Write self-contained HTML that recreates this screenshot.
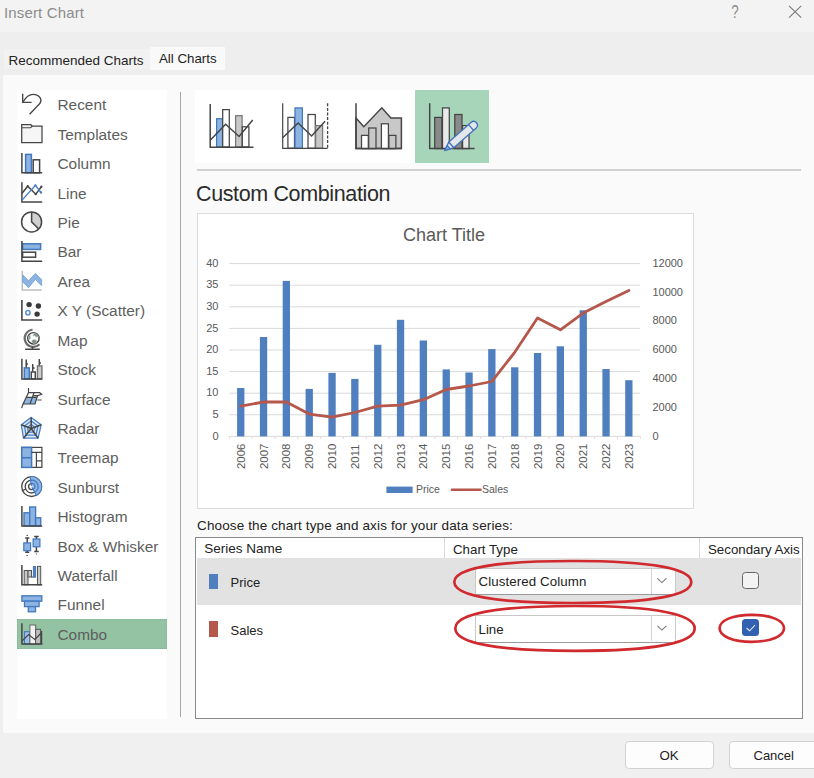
<!DOCTYPE html>
<html lang="en">
<head>
<meta charset="utf-8">
<title>Insert Chart</title>
<style>
html,body{margin:0;padding:0;}
body{width:814px;height:778px;overflow:hidden;background:#eeeeee;font-family:"Liberation Sans",sans-serif;position:relative;color:#222;}
.abs{position:absolute;}
.t{position:absolute;white-space:nowrap;line-height:1;}
#titlebar{left:0;top:0;width:814px;height:32px;background:#f3f3f3;}
#panel{left:2.5px;top:74.5px;width:812px;height:658.5px;background:#fafafa;}
#bottom{left:0;top:733px;width:814px;height:45px;background:#f0f0f0;}
#tab1{left:4px;top:49px;width:146px;height:19.5px;background:#f2f2f2;}
#tab2{left:150.3px;top:46.7px;width:75px;height:23.2px;background:#f9f9f9;}
#list{left:17px;top:89.5px;width:149.7px;height:629.3px;background:#fff;}
#sel{left:17px;top:619px;width:149.7px;height:29.5px;background:#93c3a3;box-sizing:border-box;border:1px dotted #86b697;}
#vdiv{left:180.2px;top:92px;width:1px;height:625px;background:#a6a6a6;}
#thumbs{left:195px;top:90px;width:221px;height:73px;background:#fff;}
#thsel{left:415px;top:90px;width:74px;height:73px;background:#a7d5ba;}
#hdiv{left:197px;top:169.4px;width:604px;height:1.2px;background:#d0d0d0;}
#chartbox{left:197px;top:213px;width:495px;height:294px;background:#fff;border:1px solid #dcdcdc;}
#tbl{left:195px;top:537px;width:606px;height:180px;background:#fff;border:1px solid #8a8a8a;}
#row1{left:197px;top:558px;width:603.5px;height:47.3px;background:#e2e2e3;}
.sb{font-size:15.4px;color:#5e5e5e;left:57.5px;}
.dd{position:absolute;left:475px;width:201px;height:27px;background:#fff;border:1px solid #c8c8c8;border-bottom-color:#9a9a9a;box-sizing:border-box;border-radius:2px;}
.dd i{position:absolute;left:175px;top:0;width:1px;height:25px;background:#d4d4d4;}
.btn{position:absolute;top:740.5px;height:28px;background:#fdfdfd;border:1px solid #d2d2d2;border-radius:4px;box-sizing:border-box;}
svg text.ax{font-family:"Liberation Sans",sans-serif;font-size:11px;fill:#595959;}
svg text.yr{font-family:"Liberation Sans",sans-serif;font-size:11.4px;fill:#595959;}
svg text.lg{font-family:"Liberation Sans",sans-serif;font-size:10.5px;fill:#595959;}
svg text.ct{font-family:"Liberation Sans",sans-serif;font-size:18px;fill:#595959;}
</style>
</head>
<body>
<div class="abs" id="titlebar"></div>
<div class="abs" id="panel"></div>
<div class="abs" id="bottom"></div>
<div class="abs" id="tab1"></div>
<div class="abs" id="tab2"></div>
<div class="abs" id="list"></div>
<div class="abs" id="sel"></div>
<div class="abs" id="vdiv"></div>
<div class="abs" id="thumbs"></div>
<div class="abs" id="thsel"></div>
<div class="abs" id="hdiv"></div>
<div class="abs" id="chartbox"></div>
<div class="abs" id="tbl"></div>
<div class="abs" id="row1"></div>
<div class="abs" style="left:444px;top:538px;width:1px;height:20px;background:#dcdcdc"></div>
<div class="abs" style="left:699px;top:538px;width:1px;height:20px;background:#dcdcdc"></div>

<div class="t" style="left:4px;top:5px;font-size:15px;color:#8c8c8c;letter-spacing:0.15px">Insert Chart</div>
<div class="t" style="left:729.8px;top:3px;width:10px;text-align:center;font-size:18px;color:#8c8c8c;transform:scaleX(0.74)">?</div>
<div class="t" style="left:8.5px;top:53.5px;font-size:13.5px;color:#222">Recommended Charts</div>
<div class="t" style="left:159px;top:51.5px;font-size:13.3px;color:#222">All Charts</div>

<div class="t sb" style="top:97.3px">Recent</div>
<div class="t sb" style="top:126.7px">Templates</div>
<div class="t sb" style="top:156.1px">Column</div>
<div class="t sb" style="top:185.6px">Line</div>
<div class="t sb" style="top:215.0px">Pie</div>
<div class="t sb" style="top:244.4px">Bar</div>
<div class="t sb" style="top:273.8px">Area</div>
<div class="t sb" style="top:303.2px">X Y (Scatter)</div>
<div class="t sb" style="top:332.7px">Map</div>
<div class="t sb" style="top:362.1px">Stock</div>
<div class="t sb" style="top:391.5px">Surface</div>
<div class="t sb" style="top:420.9px">Radar</div>
<div class="t sb" style="top:450.3px">Treemap</div>
<div class="t sb" style="top:479.8px">Sunburst</div>
<div class="t sb" style="top:509.2px">Histogram</div>
<div class="t sb" style="top:538.6px">Box &amp; Whisker</div>
<div class="t sb" style="top:568.0px">Waterfall</div>
<div class="t sb" style="top:597.4px">Funnel</div>
<div class="t sb" style="top:626.9px">Combo</div>

<div class="t" style="left:196px;top:183.8px;font-size:21.5px;color:#2b2b2b;letter-spacing:-0.37px">Custom Combination</div>
<div class="t" style="left:197px;top:519.4px;font-size:13.5px;color:#222;letter-spacing:0.13px">Choose the chart type and axis for your data series:</div>
<div class="t" style="left:204.3px;top:542.3px;font-size:13.5px;color:#222">Series Name</div>
<div class="t" style="left:453px;top:542.5px;font-size:13.3px;color:#222">Chart Type</div>
<div class="t" style="left:708px;top:542.5px;font-size:13.3px;color:#222">Secondary Axis</div>

<div class="abs" style="left:209.4px;top:574.3px;width:8.4px;height:14.6px;background:#4f7fbf"></div>
<div class="abs" style="left:209.4px;top:621px;width:8.4px;height:15.5px;background:#b5574b"></div>
<div class="t" style="left:230.5px;top:575.7px;font-size:13px;color:#222">Price</div>
<div class="t" style="left:230.5px;top:623.8px;font-size:13px;color:#222">Sales</div>

<div class="dd" style="top:568px"><i></i></div>
<div class="dd" style="top:615px;height:27.5px"><i></i></div>
<div class="t" style="left:478.5px;top:575px;font-size:13.3px;color:#222;letter-spacing:0.1px">Clustered Column</div>
<div class="t" style="left:478.5px;top:622.5px;font-size:13.3px;color:#222">Line</div>

<div class="abs" style="left:741.9px;top:571.8px;width:17.1px;height:16.9px;box-sizing:border-box;border:1px solid #666;border-radius:3.5px;background:#f3f3f3"></div>
<div class="abs" style="left:741.9px;top:618.9px;width:17.1px;height:17.2px;box-sizing:border-box;border-radius:3.5px;background:#3161b0"></div>

<div class="btn" style="left:624.5px;width:89.5px"></div>
<div class="btn" style="left:728.5px;width:100px"></div>
<div class="t" style="left:659.5px;top:749px;font-size:13.3px;color:#222">OK</div>
<div class="t" style="left:753.5px;top:749px;font-size:13px;color:#222">Cancel</div>

<svg class="abs" style="left:0;top:0" width="814" height="778" viewBox="0 0 814 778">
<line x1="229.3" x2="640.3" y1="436.4" y2="436.4" stroke="#d9d9d9" stroke-width="1"/>
<text x="218.5" y="439.6" text-anchor="end" class="ax">0</text>
<line x1="229.3" x2="640.3" y1="414.8" y2="414.8" stroke="#d9d9d9" stroke-width="1"/>
<text x="218.5" y="418.0" text-anchor="end" class="ax">5</text>
<line x1="229.3" x2="640.3" y1="393.2" y2="393.2" stroke="#d9d9d9" stroke-width="1"/>
<text x="218.5" y="396.4" text-anchor="end" class="ax">10</text>
<line x1="229.3" x2="640.3" y1="371.6" y2="371.6" stroke="#d9d9d9" stroke-width="1"/>
<text x="218.5" y="374.8" text-anchor="end" class="ax">15</text>
<line x1="229.3" x2="640.3" y1="350.0" y2="350.0" stroke="#d9d9d9" stroke-width="1"/>
<text x="218.5" y="353.2" text-anchor="end" class="ax">20</text>
<line x1="229.3" x2="640.3" y1="328.4" y2="328.4" stroke="#d9d9d9" stroke-width="1"/>
<text x="218.5" y="331.6" text-anchor="end" class="ax">25</text>
<line x1="229.3" x2="640.3" y1="306.8" y2="306.8" stroke="#d9d9d9" stroke-width="1"/>
<text x="218.5" y="310.0" text-anchor="end" class="ax">30</text>
<line x1="229.3" x2="640.3" y1="285.2" y2="285.2" stroke="#d9d9d9" stroke-width="1"/>
<text x="218.5" y="288.4" text-anchor="end" class="ax">35</text>
<line x1="229.3" x2="640.3" y1="263.6" y2="263.6" stroke="#d9d9d9" stroke-width="1"/>
<text x="218.5" y="266.8" text-anchor="end" class="ax">40</text>
<text x="652.4" y="439.6" class="ax">0</text>
<text x="652.4" y="410.8" class="ax">2000</text>
<text x="652.4" y="382.0" class="ax">4000</text>
<text x="652.4" y="353.2" class="ax">6000</text>
<text x="652.4" y="324.4" class="ax">8000</text>
<text x="652.4" y="295.6" class="ax">10000</text>
<text x="652.4" y="266.8" class="ax">12000</text>
<rect x="237.1" y="388.0" width="7.3" height="48.4" fill="#4f7fbf"/>
<rect x="259.9" y="337.0" width="7.3" height="99.4" fill="#4f7fbf"/>
<rect x="282.7" y="280.9" width="7.3" height="155.5" fill="#4f7fbf"/>
<rect x="305.6" y="388.9" width="7.3" height="47.5" fill="#4f7fbf"/>
<rect x="328.4" y="372.9" width="7.3" height="63.5" fill="#4f7fbf"/>
<rect x="351.2" y="378.9" width="7.3" height="57.5" fill="#4f7fbf"/>
<rect x="374.1" y="344.8" width="7.3" height="91.6" fill="#4f7fbf"/>
<rect x="396.9" y="319.8" width="7.3" height="116.6" fill="#4f7fbf"/>
<rect x="419.7" y="340.5" width="7.3" height="95.9" fill="#4f7fbf"/>
<rect x="442.6" y="369.4" width="7.3" height="67.0" fill="#4f7fbf"/>
<rect x="465.4" y="372.5" width="7.3" height="63.9" fill="#4f7fbf"/>
<rect x="488.2" y="349.1" width="7.3" height="87.3" fill="#4f7fbf"/>
<rect x="511.1" y="367.3" width="7.3" height="69.1" fill="#4f7fbf"/>
<rect x="533.9" y="353.0" width="7.3" height="83.4" fill="#4f7fbf"/>
<rect x="556.7" y="346.3" width="7.3" height="90.1" fill="#4f7fbf"/>
<rect x="579.6" y="310.3" width="7.3" height="126.1" fill="#4f7fbf"/>
<rect x="602.4" y="369.0" width="7.3" height="67.4" fill="#4f7fbf"/>
<rect x="625.2" y="380.2" width="7.3" height="56.2" fill="#4f7fbf"/>
<line x1="229.3" x2="229.3" y1="436.4" y2="438.9" stroke="#d9d9d9" stroke-width="1"/>
<line x1="252.1" x2="252.1" y1="436.4" y2="438.9" stroke="#d9d9d9" stroke-width="1"/>
<line x1="275.0" x2="275.0" y1="436.4" y2="438.9" stroke="#d9d9d9" stroke-width="1"/>
<line x1="297.8" x2="297.8" y1="436.4" y2="438.9" stroke="#d9d9d9" stroke-width="1"/>
<line x1="320.6" x2="320.6" y1="436.4" y2="438.9" stroke="#d9d9d9" stroke-width="1"/>
<line x1="343.5" x2="343.5" y1="436.4" y2="438.9" stroke="#d9d9d9" stroke-width="1"/>
<line x1="366.3" x2="366.3" y1="436.4" y2="438.9" stroke="#d9d9d9" stroke-width="1"/>
<line x1="389.1" x2="389.1" y1="436.4" y2="438.9" stroke="#d9d9d9" stroke-width="1"/>
<line x1="412.0" x2="412.0" y1="436.4" y2="438.9" stroke="#d9d9d9" stroke-width="1"/>
<line x1="434.8" x2="434.8" y1="436.4" y2="438.9" stroke="#d9d9d9" stroke-width="1"/>
<line x1="457.6" x2="457.6" y1="436.4" y2="438.9" stroke="#d9d9d9" stroke-width="1"/>
<line x1="480.5" x2="480.5" y1="436.4" y2="438.9" stroke="#d9d9d9" stroke-width="1"/>
<line x1="503.3" x2="503.3" y1="436.4" y2="438.9" stroke="#d9d9d9" stroke-width="1"/>
<line x1="526.1" x2="526.1" y1="436.4" y2="438.9" stroke="#d9d9d9" stroke-width="1"/>
<line x1="549.0" x2="549.0" y1="436.4" y2="438.9" stroke="#d9d9d9" stroke-width="1"/>
<line x1="571.8" x2="571.8" y1="436.4" y2="438.9" stroke="#d9d9d9" stroke-width="1"/>
<line x1="594.6" x2="594.6" y1="436.4" y2="438.9" stroke="#d9d9d9" stroke-width="1"/>
<line x1="617.5" x2="617.5" y1="436.4" y2="438.9" stroke="#d9d9d9" stroke-width="1"/>
<line x1="640.3" x2="640.3" y1="436.4" y2="438.9" stroke="#d9d9d9" stroke-width="1"/>
<text transform="translate(244.7,469) rotate(-90)" class="yr">2006</text>
<text transform="translate(267.6,469) rotate(-90)" class="yr">2007</text>
<text transform="translate(290.4,469) rotate(-90)" class="yr">2008</text>
<text transform="translate(313.2,469) rotate(-90)" class="yr">2009</text>
<text transform="translate(336.0,469) rotate(-90)" class="yr">2010</text>
<text transform="translate(358.9,469) rotate(-90)" class="yr">2011</text>
<text transform="translate(381.7,469) rotate(-90)" class="yr">2012</text>
<text transform="translate(404.5,469) rotate(-90)" class="yr">2013</text>
<text transform="translate(427.4,469) rotate(-90)" class="yr">2014</text>
<text transform="translate(450.2,469) rotate(-90)" class="yr">2015</text>
<text transform="translate(473.0,469) rotate(-90)" class="yr">2016</text>
<text transform="translate(495.9,469) rotate(-90)" class="yr">2017</text>
<text transform="translate(518.7,469) rotate(-90)" class="yr">2018</text>
<text transform="translate(541.5,469) rotate(-90)" class="yr">2019</text>
<text transform="translate(564.4,469) rotate(-90)" class="yr">2020</text>
<text transform="translate(587.2,469) rotate(-90)" class="yr">2021</text>
<text transform="translate(610.0,469) rotate(-90)" class="yr">2022</text>
<text transform="translate(632.9,469) rotate(-90)" class="yr">2023</text>
<polyline points="240.7,406.2 263.6,402.0 286.4,402.0 309.2,414.1 332.0,417.2 354.9,412.5 377.7,406.2 400.5,405.2 423.4,399.7 446.2,389.5 469.0,386.0 491.9,381.5 514.7,352.3 537.5,318.0 560.4,329.8 583.2,313.1 606.0,301.5 628.9,290.4" fill="none" stroke="#b5574b" stroke-width="2.8" stroke-linejoin="round" stroke-linecap="round"/>
<rect x="386.4" y="486.6" width="26.2" height="6.4" fill="#4f7fbf"/>
<text x="416" y="493.3" class="lg">Price</text>
<line x1="452" x2="480.5" y1="489.8" y2="489.8" stroke="#b5574b" stroke-width="2.6" stroke-linecap="round"/>
<text x="482" y="493.3" class="lg">Sales</text>
<text x="444" y="241" text-anchor="middle" class="ct">Chart Title</text>
<g fill="none" stroke="#454545" stroke-width="1.5" stroke-linecap="butt" stroke-linejoin="miter">
<!-- Recent -->
<path d="M22.7 93.8 V102.3 H31.6" stroke-width="1.35"/>
<path d="M23.2 101.8 C25.5 97.5 29 94.3 33.3 94.3 C38 94.3 40.9 97.2 40.9 100.4 C40.9 102.6 39.6 104 37.4 106 L29.6 114.2" stroke-width="1.35"/>
<!-- Templates -->
<path d="M21.7 124.7 H30.8 L32.3 126 H42 V142.7 H21.7 Z" fill="#f6f6f6" stroke-width="1.25"/>
<path d="M21.7 127.8 H30.6 L32.3 126" stroke-width="1.1"/>
<!-- Column -->
<rect x="25.6" y="154.4" width="5.8" height="18.4" fill="#8db3e2" stroke="#4178be"/>
<rect x="33.2" y="159.8" width="6.4" height="13" fill="#fff"/>
<path d="M21.9 153 V172.8 H42.2"/>
<!-- Line -->
<path d="M21.9 182.3 V202 H42.2"/>
<path d="M21.9 193.5 L27.7 186.2 L35.8 194.2 L41.6 186.5"/>
<path d="M21.9 200.4 L35.4 185.4 L41.2 192.7" stroke="#4a80c5" stroke-width="1.4"/>
<g stroke="none"><circle cx="27.7" cy="186.2" r="1.1" fill="#454545"/><circle cx="35.8" cy="194.2" r="1.1" fill="#454545"/><circle cx="41.4" cy="186.7" r="1.1" fill="#454545"/><circle cx="35.4" cy="185.4" r="1.2" fill="#4a80c5"/><circle cx="41" cy="192.5" r="1.2" fill="#4a80c5"/></g>
<!-- Pie -->
<path d="M31.6 221.9 V211.9 A10 10 0 0 1 38.7 229 Z" fill="#d0d0d0" stroke="none"/>
<circle cx="31.6" cy="221.9" r="10"/>
<path d="M31.6 211.9 V221.9 L38.7 229"/>
<!-- Bar -->
<rect x="22.6" y="243.8" width="18" height="5.6" fill="#8db3e2" stroke="#4178be"/>
<rect x="22.6" y="252.2" width="13" height="5" fill="#fff"/>
<path d="M21.9 241.1 V261.2 H42.2"/>
<!-- Area -->
<path d="M22.3 271.1 V290 H41.8" stroke="#bdbdbd"/>
<path d="M22.7 274.9 L28.5 280.7 L35.4 273.4 L41.6 279.6 V285.7 L35.4 279.6 L28.5 287.7 L22.7 281.9 Z" fill="#8db3e2" stroke="#6f9fd6" stroke-width="0.8"/>
<!-- Scatter -->
<path d="M21.9 300 V320 H42.2" stroke-width="1.6"/>
<circle cx="29.1" cy="304.6" r="2.7" fill="#3a3a3a" stroke="none"/>
<circle cx="38.4" cy="306" r="2.7" fill="#3a3a3a" stroke="none"/>
<circle cx="37.1" cy="314.1" r="2.7" fill="#3a3a3a" stroke="none"/>
<circle cx="27.9" cy="312.7" r="2.1" stroke="#5b8fd0" stroke-width="1.5"/>
<!-- Map -->
<path d="M32.55 329.73 A8.6 8.6 0 1 0 39.49 344.27" stroke="#6b6b6b" stroke-width="2.2"/>
<circle cx="33.4" cy="338.3" r="5.7" fill="#fff" stroke="#3f3f3f" stroke-width="1.4"/>
<path d="M33.8 333.2 l3.2 1 l1.6 2.6 l-2.6 0.2 l-1.4 -1.4 l-1.6 0.4 z M31.8 340.6 l2.2 -1.2 l2.4 0.8 l0.4 2.4 l-2.6 1.2 l-2 -1 z M28.6 336 l1.6 -1 l0.2 3.4 l-1.4 1.4 z" fill="#8a8a8a" stroke="#9fd3b3" stroke-width="0.5"/>
<path d="M32.4 346.6 V349.2 M25.2 349.2 H39.8"/>
<!-- Stock -->
<rect x="24.3" y="367.9" width="5" height="11" fill="#8db3e2" stroke="#4178be"/>
<rect x="31.3" y="372" width="4" height="6.9" fill="#fff"/>
<rect x="37.5" y="366" width="4.4" height="12.9" fill="#cfcfcf" stroke="#777"/>
<path d="M21.9 358.8 V378.9 H42.2"/>
<path d="M26.2 359.6 V367.5 M26.2 364 H28 M32.7 364 V371.6 M32.7 368 H34.5 M39.3 359 V365.6 M39.3 363 H41"/>
<!-- Surface -->
<path d="M27 397.3 H37.2 L35 404 H23.1 Z" fill="#8db3e2" stroke="none"/>
<path d="M28.5 388 V392.7 M28.5 392.7 H39.7 L41.6 394.2 L37.6 395.6 L35 404 H23.1 Z M21.6 408.1 L23.1 404 M34 392.7 L30 404 M26.8 397.3 H37.2 M37.4 400 H41.6 M33.5 395.3 L37.6 395.6" stroke-width="1.2"/>
<!-- Radar -->
<g stroke="#4a80c5" stroke-width="1.3">
<path d="M31.2 417.4 L41.2 424.7 L38.1 438.2 H23.5 L21.3 424.7 Z" fill="#dbe7f6"/>
<path d="M31.2 421 L38 426 L35.9 435.2 H26 L24.5 426 Z"/>
<path d="M31.2 424.6 L34.9 427.3 L33.7 432.2 H28.4 L27.6 427.3 Z"/>
</g>
<path d="M31.2 428.5 V417.4 M31.2 428.5 L41.2 424.7 M31.2 428.5 L38.1 438.2 M31.2 428.5 L23.5 438.2 M31.2 428.5 L21.3 424.7" stroke-width="1.5"/>
<!-- Treemap -->
<rect x="21.7" y="447.4" width="20.2" height="20" fill="#fff" stroke-width="1.2"/>
<rect x="21.7" y="447.4" width="9.9" height="20" fill="#8db3e2" stroke="#4178be"/>
<path d="M21.7 457.7 H31.6" stroke="#4178be"/>
<path d="M31.6 452.3 H41.9 M36.4 452.3 V467.4 M36.4 460.8 H41.9" stroke-width="1.2"/>
<!-- Sunburst -->
<g stroke-width="1.3">
<circle cx="31.6" cy="486.6" r="9.9" fill="#fff"/>
<circle cx="31.6" cy="486.6" r="6.4"/>
<circle cx="31.6" cy="486.6" r="3"/>
<path d="M22.6 490.5 L25.7 489.1"/>
</g>
<path d="M31.6 486.6 L30.1 476.6 A10.1 10.1 0 0 1 36.4 495.5 Z" fill="#8db3e2" stroke="#4178be" stroke-width="1.1"/>
<path d="M30.6 480.2 A6.5 6.5 0 0 1 34.7 492.3 M31.1 483.6 A3 3 0 0 1 33 489.3" stroke="#4178be" stroke-width="1.1"/>
<circle cx="31.9" cy="486.6" r="0.9" fill="#fff" stroke="none"/>
<!-- Histogram -->
<g fill="#8db3e2" stroke="#4178be" stroke-width="1.4">
<rect x="24" y="512.8" width="5.7" height="13.2"/>
<rect x="29.7" y="507" width="5.9" height="19"/>
<rect x="35.6" y="517.8" width="5.1" height="8.2"/>
</g>
<path d="M21.9 506.1 V526 H42.2"/>
<!-- Box & Whisker -->
<path d="M27.2 538 V552.3 M25.2 538 H29.3 M25.2 552.3 H29.3 M36.4 536.5 V551.4 M34.2 536.5 H38.7 M34.2 551.4 H38.7"/>
<path d="M26.4 535.4 H28 M26.4 555.5 H28 M35.8 554 H37" stroke-width="0.9"/>
<g fill="#8db3e2" stroke="#4178be" stroke-width="1.2">
<rect x="23.8" y="542.9" width="6.8" height="7.8"/>
<rect x="33.1" y="539" width="6.8" height="7.8"/>
</g>
<!-- Waterfall -->
<g fill="#c9c9c9" stroke="#555" stroke-width="1">
<rect x="24.2" y="570.5" width="3.8" height="14.3"/>
<rect x="37.5" y="566.4" width="3.2" height="18.4"/>
</g>
<rect x="28" y="570.5" width="3.5" height="6.5" fill="#c9c9c9" stroke="#555" stroke-width="1"/>
<path d="M31.5 577 H33.5" stroke-width="1"/>
<rect x="33.3" y="566.4" width="2.4" height="10.8" fill="#4a80c5" stroke="#3b6fb6" stroke-width="0.8"/>
<path d="M21.9 565 V584.8 H42.2"/>
<!-- Funnel -->
<g fill="#8db3e2" stroke="#4178be" stroke-width="1.3">
<rect x="21.9" y="595.8" width="19.9" height="5.4"/>
<rect x="24.5" y="601.2" width="14.6" height="5.4"/>
<rect x="28.3" y="606.6" width="7.2" height="5.2"/>
</g>
<!-- Combo -->
<rect x="24.5" y="631.7" width="5.4" height="12.3" fill="#9dc0ea" stroke="#4178be" stroke-width="1.1"/>
<rect x="29.9" y="625" width="5.7" height="19" fill="#f2f2f2" stroke="#666" stroke-width="1"/>
<rect x="35.6" y="629.3" width="5" height="14.7" fill="#bdbdbd" stroke="#555" stroke-width="1"/>
<path d="M41.6 631 V644" stroke-width="1.2"/>
<path d="M21.9 623.2 V644 H42.5"/>
<path d="M21.9 641.2 L28.6 634.5 L34.8 639.4 L41.7 632.5" stroke-width="1.2"/>
</g>

<g fill="none" stroke="#454545" stroke-width="1.25">
<!-- thumb 1 -->
<rect x="216.6" y="118.7" width="5.9" height="28.3" fill="#8db3e2" stroke="#4178be"/>
<rect x="222.7" y="109.6" width="6.6" height="37.4" fill="#fff"/>
<rect x="235.6" y="115.7" width="6.5" height="31.3" fill="#c8c8c8" stroke="#777"/>
<rect x="242.3" y="126.8" width="6.6" height="20.2" fill="#fff"/>
<path d="M210.2 104 V147.2 H253.5" stroke-width="1.5"/>
<path d="M210.2 140.2 L225.6 124.2 L239.1 136.5 L252.7 120" stroke-width="1.5"/>
<!-- thumb 2 -->
<rect x="287.9" y="117.4" width="6.6" height="30.8" fill="#fff"/>
<rect x="295" y="107.9" width="7.4" height="40.3" fill="#8db3e2" stroke="#4178be"/>
<rect x="308" y="114.5" width="7.3" height="33.7" fill="#fff"/>
<rect x="315.6" y="125.6" width="7" height="22.6" fill="#c8c8c8" stroke="#777"/>
<path d="M282.7 103.3 V148.4 H327.6" stroke-width="1.2"/>
<path d="M327.6 103.3 V148.4" stroke-dasharray="3 1.6" stroke-width="1.3"/>
<path d="M282.7 137.7 L298.1 123 L311.6 136 L325.1 121.3" stroke-width="1.5"/>
<!-- thumb 3 -->
<path d="M356 118.1 L363.8 126.7 L381.8 107.8 L390.9 118.1 H401.4 V148.6 H356 Z" fill="#c8c8c8" stroke-width="1.5"/>
<rect x="361.5" y="135.4" width="6.8" height="13.2" fill="#fff"/>
<rect x="368.7" y="128" width="7.3" height="20.6" fill="#c8c8c8"/>
<rect x="381.4" y="123.8" width="7" height="24.8" fill="#fff"/>
<rect x="388.9" y="135.4" width="7" height="13.2" fill="#c8c8c8"/>
<path d="M356 103.3 V148.6 H401.6" stroke-width="1.5"/>
<!-- thumb 4 -->
<rect x="434.7" y="117.4" width="7.2" height="31.2" fill="#8a8a8a"/>
<rect x="442.5" y="107.9" width="6.8" height="40.7" fill="#e9e9e9"/>
<rect x="454.8" y="114.5" width="7.2" height="34.1" fill="#8a8a8a"/>
<rect x="462.6" y="125.6" width="6.4" height="23" fill="#e9e9e9"/>
<path d="M429.7 103.3 V148.6 H474.6" stroke-width="1.5"/>
<g transform="translate(444.9,150.5) rotate(-41.3)" stroke="#3f73bb" stroke-width="1.3" stroke-linejoin="round">
<path d="M0 0 L8.5 -3.8 H38 Q42 -3.8 42 0 Q42 3.8 38 3.8 H8.5 Z" fill="#e4e6ea"/>
<path d="M0 0 L5 -2.3 V2.3 Z" fill="#8db3e2"/>
<path d="M8.5 -3.8 V3.8 M34.8 -3.8 V3.8"/>
</g>
</g>

<g fill="none" stroke="#d02a2f" stroke-width="2.7">
<path d="M454.3 582.0 C454.3 569.0 492.2 561.0 572.8 561.0 C653.4 561.0 691.3 569.0 691.3 582.0 C691.3 595.0 653.4 603.0 572.8 603.0 C492.2 603.0 454.3 595.0 454.3 582.0Z"/>
<path d="M455.3 628.4 C455.3 614.5 493.6 606.0 575.0 606.0 C656.4 606.0 694.7 614.5 694.7 628.4 C694.7 642.3 656.4 650.8 575.0 650.8 C493.6 650.8 455.3 642.3 455.3 628.4Z"/>
<path d="M719.6 628.3 C719.6 620.5 732.5 614.8 751.8 614.8 C771.1 614.8 784.0 620.5 784.0 628.3 C784.0 636.1 771.1 641.8 751.8 641.8 C732.5 641.8 719.6 636.1 719.6 628.3Z"/>
</g>
<g fill="none" stroke="#777" stroke-width="1.05">
<path d="M657.4 578.4 L661.9 582.6 L666.4 578.4"/>
<path d="M657.4 625.9 L661.9 630.1 L666.4 625.9"/>
</g>
<path d="M746.6 628 L749.6 630.8 L755 625.2" fill="none" stroke="#e6edf8" stroke-width="1.05"/>
<path d="M789 5.8 L801.2 17.6 M801.2 5.8 L789 17.6" fill="none" stroke="#7a7a7a" stroke-width="1.1"/>

</svg>
</body>
</html>
